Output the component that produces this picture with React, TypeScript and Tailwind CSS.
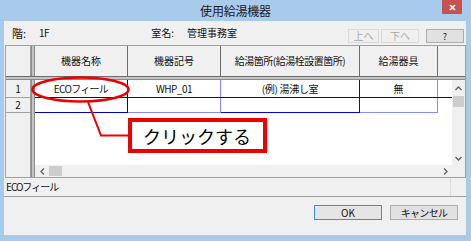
import React from "react";

const cellHdr =
  "flex items-center justify-center border-r border-[#6e6e6e] text-[10px] text-[#111] leading-none";

function VScroll() {
  return (
    <div className="w-[13px] flex flex-col bg-[#f0f0f0]">
      <div className="h-[16px] flex items-center justify-center">
        <svg width="7" height="5" viewBox="0 0 7 5">
          <path d="M0.5 4 L3.5 1 L6.5 4" stroke="#606060" strokeWidth="1.3" fill="none" />
        </svg>
      </div>
      <div className="h-[11px] mx-[1px] bg-[#cdcdcd]" />
      <div className="flex-1" />
      <div className="h-[14px] flex items-center justify-center">
        <svg width="7" height="5" viewBox="0 0 7 5">
          <path d="M0.5 1 L3.5 4 L6.5 1" stroke="#606060" strokeWidth="1.3" fill="none" />
        </svg>
      </div>
    </div>
  );
}

function HScroll() {
  return (
    <div className="h-[12px] flex bg-[#f0f0f0]">
      <div className="w-[14px] flex items-center justify-center">
        <svg width="5" height="7" viewBox="0 0 5 7">
          <path d="M4 0.5 L1 3.5 L4 6.5" stroke="#606060" strokeWidth="1.3" fill="none" />
        </svg>
      </div>
      <div className="w-[13px] my-[1px] bg-[#cdcdcd]" />
      <div className="flex-1" />
      <div className="w-[14px] flex items-center justify-center">
        <svg width="5" height="7" viewBox="0 0 5 7">
          <path d="M1 0.5 L4 3.5 L1 6.5" stroke="#606060" strokeWidth="1.3" fill="none" />
        </svg>
      </div>
    </div>
  );
}

export default function App() {
  return (
    <div className="relative w-[471px] h-[241px] bg-[#a9cbeb] flex flex-col overflow-hidden font-['Noto_Sans_CJK_JP',sans-serif] text-[#111]">
      {/* Title bar */}
      <div className="relative h-[21px] flex items-center justify-center">
        <span className="text-[12px] leading-none tracking-[-0.2px] text-[#1a1a1a]">使用給湯機器</span>
        <div className="absolute right-[9px] top-0 w-[20px] h-[14px] bg-[#c75050] flex items-center justify-center">
          <svg width="7" height="7" viewBox="0 0 7 7">
            <path d="M1 1 L6 6 M6 1 L1 6" stroke="#ffffff" strokeWidth="1.6" />
          </svg>
        </div>
      </div>

      {/* Client area */}
      <div className="flex-1 ml-[4px] mr-[5px] mb-[6px] bg-[#f0f0f0] flex flex-col">
        {/* Info row */}
        <div className="h-[24px] flex items-center text-[10px] leading-none">
          <span className="ml-[8px] text-[11px]">階:</span>
          <span className="ml-[13px] tracking-[-0.5px]">1F</span>
          <span className="ml-[102px]">室名:</span>
          <span className="ml-[13px]">管理事務室</span>
          <div className="flex-1" />
          <div className="mt-[6px] flex items-center">
            <div className="w-[31px] h-[14px] border border-[#d9d9d9] flex items-center justify-center text-[#a8a8a8]">
              上へ
            </div>
            <div className="ml-[2px] w-[38px] h-[14px] border border-[#d9d9d9] flex items-center justify-center text-[#a8a8a8]">
              下へ
            </div>
            <div className="ml-[7px] mr-[2px] w-[38px] h-[14px] border border-[#adadad] bg-[#e1e1e1] flex items-center justify-center text-[9px]">
              ?
            </div>
          </div>
        </div>

        {/* Grid */}
        <div className="ml-[1px] h-[133px] border border-[#a0a0a0] flex flex-col bg-[#f0f0f0]">
          {/* header */}
          <div className="h-[31px] flex border-b border-[#6e6e6e]">
            <div className="w-[25px] border-r border-[#a0a0a0]" />
            <div className="w-[4px] bg-[#c4c4c4] border-x border-[#8a8a8a]" />
            <div className={`w-[93px] ${cellHdr}`}>機器名称</div>
            <div className={`w-[93px] ${cellHdr}`}>機器記号</div>
            <div className={`w-[139px] ${cellHdr} tracking-[-0.5px]`}>給湯箇所(給湯栓設置箇所)</div>
            <div className={`w-[78px] ${cellHdr}`}>給湯器具</div>
            <div className="flex-1" />
          </div>
          {/* horizontal frozen divider */}
          <div className="h-[3px] bg-[#c4c4c4] border-b border-[#8a8a8a]" />
          {/* body */}
          <div className="flex-1 flex">
            <div className="w-[25px] flex flex-col border-r border-[#a0a0a0]">
              <div className="h-[18px] border-b border-[#a0a0a0] flex items-center justify-center text-[10px] leading-none">1</div>
              <div className="h-[15px] border-b border-[#a0a0a0] flex items-center justify-center text-[10px] leading-none">2</div>
            </div>
            <div className="w-[4px] bg-[#c4c4c4] border-x border-[#8a8a8a]" />
            <div className="flex-1 flex flex-col">
              <div className="flex-1 flex">
                <div className="flex-1 bg-white flex flex-col text-[10px] leading-none">
                  <div className="h-[18px] flex border-b border-[#0000c8]">
                    <div className="w-[93px] border-r border-[#0000c8] flex items-center justify-center tracking-[-0.7px]">ECOフィール</div>
                    <div className="w-[93px] border-r border-[#8888ff] flex items-center justify-center tracking-[-0.5px]">WHP_01</div>
                    <div className="w-[139px] border-r border-[#0000ff] flex items-center justify-center tracking-[-0.3px]">(例) 湯沸し室</div>
                    <div className="w-[78px] border-r border-[#8888ff] flex items-center justify-center">無</div>
                  </div>
                  <div className="h-[15px] flex">
                    <div className="w-[93px] border-r border-b border-[#0000c8]" />
                    <div className="w-[93px] border-r border-b border-[#8888ff]" />
                    <div className="w-[139px] border-r border-b border-[#0000ff]" />
                    <div className="w-[78px] border-r border-b border-[#8888ff]" />
                  </div>
                  <div className="flex-1" />
                </div>
                <VScroll />
              </div>
              <div className="flex">
                <div className="flex-1">
                  <HScroll />
                </div>
                <div className="w-[13px] h-[12px] bg-[#f0f0f0]" />
              </div>
            </div>
          </div>
        </div>

        {/* Status bar */}
        <div className="h-[19px] flex border-b border-[#a0a0a0] text-[10px] leading-none">
          <div className="flex-1 flex items-center pl-[2px] border-r border-[#dcdcdc] tracking-[-1px]">ECOフィール</div>
          <div className="w-[15px]" />
        </div>

        {/* Buttons */}
        <div className="flex-1 flex justify-end items-start pt-[8px] pr-[8px] text-[10px] leading-none">
          <div className="w-[68px] h-[15px] border border-[#3b8ee0] bg-[#e5e5e5] flex items-center justify-center">OK</div>
          <div className="ml-[8px] w-[68px] h-[15px] border border-[#adadad] bg-[#e1e1e1] flex items-center justify-center tracking-[-0.7px]">キャンセル</div>
        </div>
      </div>

      {/* Callout overlay */}
      <svg className="absolute left-0 top-0 pointer-events-none" width="471" height="241" viewBox="0 0 471 241">
        <ellipse cx="80.5" cy="89.5" rx="48" ry="12" fill="none" stroke="#ee0000" strokeWidth="2.5" />
        <path d="M88 102 L101 135.5 L128 135.5" fill="none" stroke="#ee0000" strokeWidth="2" />
      </svg>
      <div className="absolute left-[128px] top-[118px] w-[139px] h-[35px] border-[4px] border-[#ee0000] bg-white flex items-center pl-[11px]">
        <span className="text-[18px] leading-none text-black">クリックする</span>
      </div>
    </div>
  );
}
